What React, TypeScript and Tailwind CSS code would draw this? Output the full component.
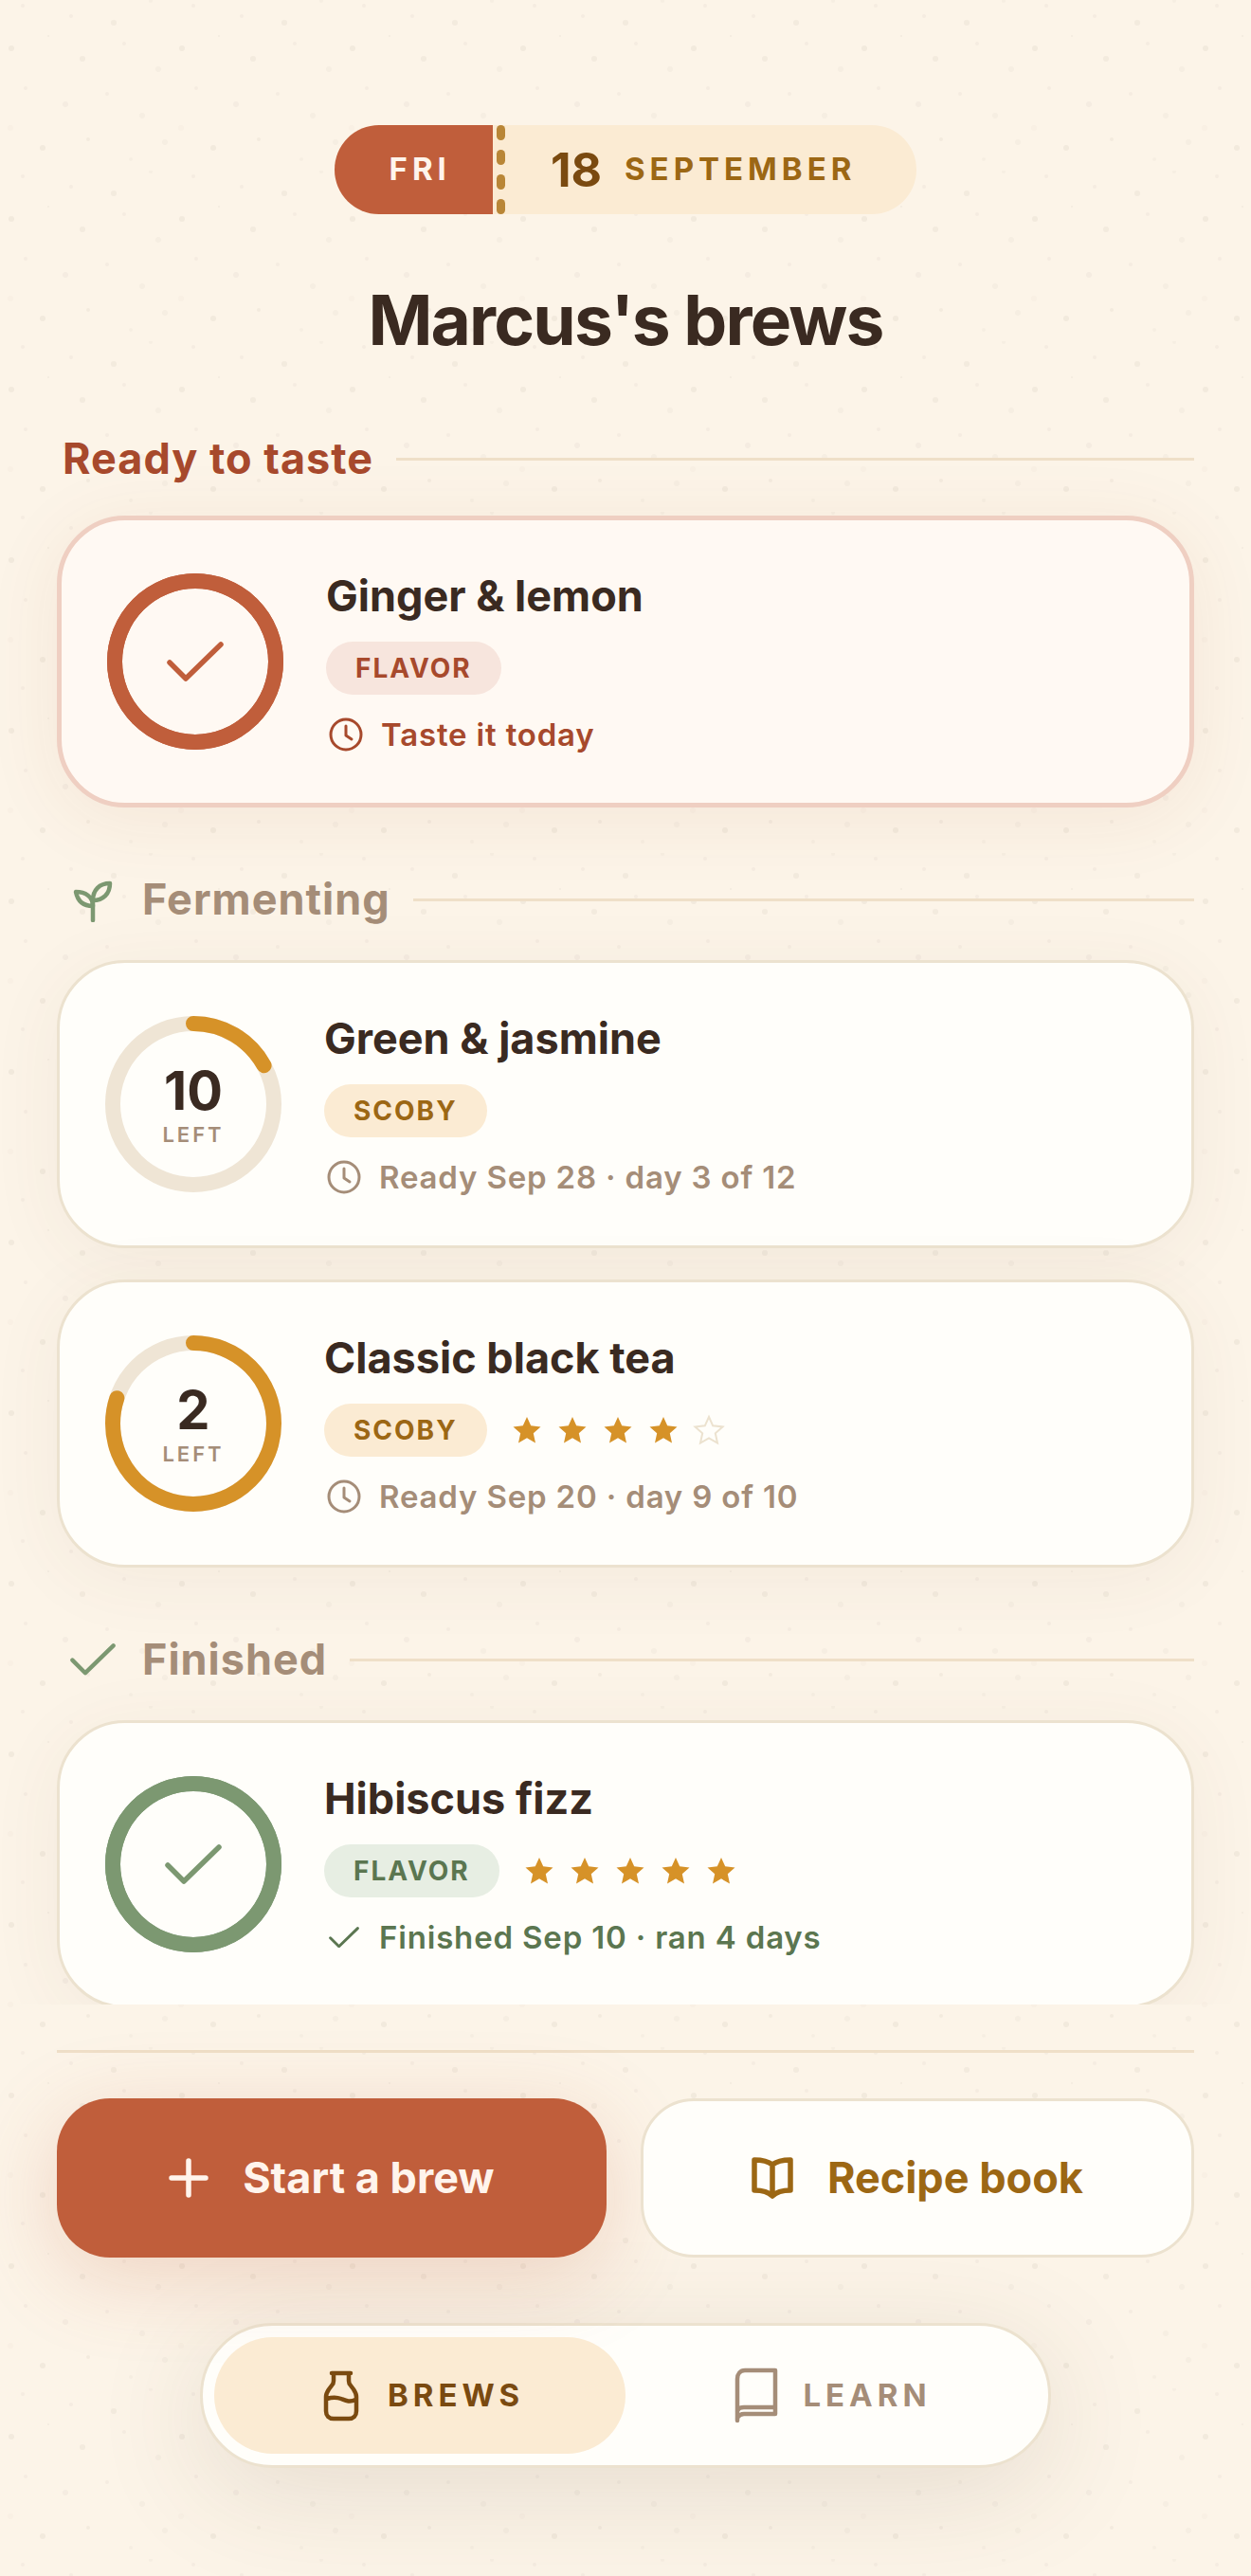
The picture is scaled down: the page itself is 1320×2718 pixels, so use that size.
import React from "react";

type Tone = "red" | "amber" | "green";

const SPECKS: [number, number, number, number][] = [
  [24, 6, 2, 0.04], [75, 17, 2, 0.04], [120, 24, 3, 0.05], [51, 38, 1, 0.05], [12, 51, 3, 0.06],
  [131, 46, 2, 0.04], [87, 62, 3, 0.05], [167, 73, 3, 0.03], [27, 93, 2, 0.04], [113, 99, 2, 0.04],
  [69, 110, 3, 0.04], [150, 122, 3, 0.03], [11, 135, 3, 0.02], [93, 147, 2, 0.05], [45, 156, 3, 0.06],
  [174, 150, 3, 0.03], [138, 168, 2, 0.03], [159, 1, 2, 0.03],
];

function Speckles() {
  return (
    <svg className="pointer-events-none absolute inset-0 h-full w-full" aria-hidden="true">
      <defs>
        <pattern id="specks" width="180" height="180" patternUnits="userSpaceOnUse">
          {SPECKS.map(([x, y, r, o]) => (
            <circle key={`${x}-${y}`} cx={x} cy={y} r={r} fill="#4f3c2b" opacity={o} />
          ))}
        </pattern>
      </defs>
      <rect width="100%" height="100%" fill="url(#specks)" />
    </svg>
  );
}

function Clock() {
  return (
    <svg viewBox="0 0 42 42" className="h-[42px] w-[42px]" fill="none" stroke="currentColor" strokeWidth="3" strokeLinecap="round" strokeLinejoin="round" aria-hidden="true">
      <circle cx="21" cy="21" r="16" />
      <path d="M21 12v10l6 4" />
    </svg>
  );
}

function Check({ className }: { className: string }) {
  return (
    <svg viewBox="0 0 60 43" className={className} fill="none" stroke="currentColor" strokeWidth="5.5" strokeLinecap="round" strokeLinejoin="round" aria-hidden="true">
      <path d="M3 22 20 39 57 3" />
    </svg>
  );
}

function Sprout() {
  return (
    <svg viewBox="0 0 48 48" className="h-12 w-12" fill="none" stroke="currentColor" strokeWidth="4.5" strokeLinecap="round" strokeLinejoin="round" aria-hidden="true">
      <path d="M24 46V24" />
      <path d="M24 31C14 31 8 26 6 16C16 16 24 21 24 31Z" />
      <path d="M24 25C24 14 31 7 42 7C42 18 35 25 24 25Z" />
    </svg>
  );
}

function Ring({ color, track, progress, children }: { color: string; track: string; progress: number; children: React.ReactNode }) {
  const c = 2 * Math.PI * 85;
  return (
    <div className="relative grid h-[186px] w-[186px] shrink-0 place-items-center">
      <svg viewBox="0 0 186 186" className="absolute inset-0 -rotate-90" fill="none" strokeWidth="16" aria-hidden="true">
        <circle cx="93" cy="93" r="85" stroke={track} />
        <circle cx="93" cy="93" r="85" stroke={color} strokeLinecap="round" strokeDasharray={`${c * progress} ${c}`} />
      </svg>
      {children}
    </div>
  );
}

function Left({ days }: { days: number }) {
  return (
    <div className="flex flex-col items-center pt-2">
      <span className="text-[56px] leading-[56px] font-bold text-[#3a2a21]">{days}</span>
      <span className="text-[22px] leading-9 font-semibold tracking-[3px] text-[#a58d78]">LEFT</span>
    </div>
  );
}

function Stars({ value }: { value: number }) {
  return (
    <div className="ml-6 flex gap-3" role="img" aria-label={`${value} out of 5 stars`}>
      {[1, 2, 3, 4, 5].map((n) => (
        <svg key={n} viewBox="0 0 36 36" className="h-9 w-9" aria-hidden="true">
          <path
            d="M18 4 22.2 13.3 32.5 14.4 24.8 21.3 27 31.5 18 26.3 9 31.5 11.2 21.3 3.5 14.4 13.8 13.3Z"
            fill={n <= value ? "#d69228" : "none"}
            stroke={n <= value ? "none" : "#ece2cf"}
            strokeWidth="2"
          />
        </svg>
      ))}
    </div>
  );
}

const BADGE: Record<Tone, string> = {
  red: "bg-[#f7e5dd] text-[#a7492c]",
  amber: "bg-[#fbebd3] text-[#9c6714]",
  green: "bg-[#e7eee3] text-[#5b7650]",
};

function Card({ highlight, ring, title, badge, tone, stars, note, noteClass }: {
  highlight?: boolean;
  ring: React.ReactNode;
  title: string;
  badge: string;
  tone: Tone;
  stars?: number;
  note: React.ReactNode;
  noteClass: string;
}) {
  return (
    <article
      className={
        highlight
          ? "flex items-center gap-[45px] rounded-[72px] border-5 border-[#efcfc2] bg-[#fff9f3] px-12 py-[50px] shadow-[0_12px_80px_rgba(150,80,40,0.08)]"
          : "flex items-center gap-[45px] rounded-[72px] border-3 border-[#ece2cf] bg-[#fffefa] px-12 py-[50px] shadow-[0_12px_80px_rgba(95,75,50,0.06)]"
      }
    >
      {ring}
      <div className="flex min-w-0 flex-col">
        <h3 className="text-[45px] leading-[60px] font-bold text-[#3a2a21]">{title}</h3>
        <div className="mt-[18px] flex items-center">
          <span className={`rounded-full px-[31px] text-[28px] leading-[56px] font-bold tracking-[2px] ${BADGE[tone]}`}>{badge}</span>
          {stars !== undefined && <Stars value={stars} />}
        </div>
        <p className={`mt-5 flex items-center gap-4 text-[33px] leading-[44px] font-semibold tracking-wide ${noteClass}`}>{note}</p>
      </div>
    </article>
  );
}

function SectionTitle({ icon, className, children }: { icon?: React.ReactNode; className: string; children: React.ReactNode }) {
  return (
    <div className="flex items-center gap-6">
      <h2 className={`flex items-center gap-7 text-[45px] leading-[60px] font-bold tracking-[1px] ${className}`}>
        {icon}
        {children}
      </h2>
      <div className="h-[3px] flex-1 bg-[#efdfc8]" />
    </div>
  );
}

export default function App() {
  return (
    <div className="relative flex h-screen flex-col overflow-hidden bg-[#fcf4e8] font-['Inter',sans-serif]">
      <Speckles />
      <header className="relative flex flex-col items-center pt-33">
        <time className="flex h-[94px] items-stretch overflow-hidden rounded-full bg-[#fbebd3]">
          <span className="flex items-center bg-[#c05e3b] pr-11 pl-[58px] text-[33px] font-bold tracking-[5px] text-[#fff4ec]">FRI</span>
          <span className="ml-1 flex flex-col justify-between" aria-hidden="true">
            {[0, 1, 2, 3].map((n) => (
              <span key={n} className="h-4 w-[9px] rounded-full bg-[#b98637]" />
            ))}
          </span>
          <span className="flex items-center gap-6 pr-16 pl-12">
            <span className="text-[50px] font-bold text-[#7a4a10]">18</span>
            <span className="text-[33px] font-bold tracking-[5px] text-[#9c6714]">SEPTEMBER</span>
          </span>
        </time>
        <h1 className="mt-16 text-[73px] leading-[96px] font-bold tracking-tight text-[#3a2a21]">Marcus's brews</h1>
      </header>

      <main className="relative min-h-0 flex-1 overflow-y-auto px-15 pt-17 [scrollbar-width:none]">
        <section>
          <SectionTitle className="pl-[6px] text-[#a7492c]">Ready to taste</SectionTitle>
          <div className="mt-[30px]">
            <Card
              highlight
              ring={
                <Ring color="#c05e3b" track="#c05e3b" progress={1}>
                  <Check className="w-15 text-[#c05e3b]" />
                </Ring>
              }
              title="Ginger & lemon"
              badge="FLAVOR"
              tone="red"
              noteClass="text-[#a7492c]"
              note={<><Clock />Taste it today</>}
            />
          </div>
        </section>

        <section className="mt-[67px]">
          <SectionTitle icon={<Sprout />} className="pl-[14px] text-[#a58d78] [&>svg]:text-[#7c9871]">Fermenting</SectionTitle>
          <div className="mt-[34px] flex flex-col gap-[33px]">
            <Card
              ring={<Ring color="#d69228" track="#efe5d5" progress={0.17}><Left days={10} /></Ring>}
              title="Green & jasmine"
              badge="SCOBY"
              tone="amber"
              noteClass="text-[#a58d78]"
              note={<><Clock />Ready Sep 28 · day 3 of 12</>}
            />
            <Card
              ring={<Ring color="#d69228" track="#efe5d5" progress={0.8}><Left days={2} /></Ring>}
              title="Classic black tea"
              badge="SCOBY"
              tone="amber"
              stars={4}
              noteClass="text-[#a58d78]"
              note={<><Clock />Ready Sep 20 · day 9 of 10</>}
            />
          </div>
        </section>

        <section className="mt-[67px]">
          <SectionTitle icon={<Check className="w-12" />} className="pl-[14px] text-[#a58d78] [&>svg]:text-[#7c9871]">Finished</SectionTitle>
          <div className="mt-[34px]">
            <Card
              ring={
                <Ring color="#7c9871" track="#7c9871" progress={1}>
                  <Check className="w-15 text-[#7c9871]" />
                </Ring>
              }
              title="Hibiscus fizz"
              badge="FLAVOR"
              tone="green"
              stars={5}
              noteClass="text-[#5b7650]"
              note={<><Check className="mx-[5px] w-8" />Finished Sep 10 · ran 4 days</>}
            />
          </div>
        </section>
      </main>

      <footer className="relative px-15 pt-12 pb-[114px]">
        <div className="h-[3px] bg-[#efdfc8]" />
        <div className="mt-12 flex gap-9">
          <button type="button" className="flex h-[168px] flex-auto items-center justify-center gap-9 rounded-[56px] bg-[#c05e3b] px-1 text-[45px] font-bold text-[#fff4ec] shadow-[0_20px_90px_rgba(192,94,59,0.22)]">
            <svg viewBox="0 0 42 42" className="h-[42px] w-[42px]" stroke="currentColor" strokeWidth="5.5" strokeLinecap="round" aria-hidden="true">
              <path d="M21 3v36M3 21h36" />
            </svg>
            Start a brew
          </button>
          <button type="button" className="flex h-[168px] flex-auto items-center justify-center gap-9 rounded-[56px] border-3 border-[#ece2cf] bg-[#fffefa] text-[45px] font-bold text-[#9c6714]">
            <svg viewBox="0 0 44 44" className="h-11 w-11" fill="none" stroke="currentColor" strokeWidth="5.5" strokeLinejoin="round" aria-hidden="true">
              <path d="M22 8C17 4 10 3 3 3v32c7 0 14 1 19 6 5-5 12-6 19-6V3C34 3 27 4 22 8ZM22 8v32" />
            </svg>
            Recipe book
          </button>
        </div>
        <nav className="mx-auto mt-[69px] grid h-[153px] w-[898px] max-w-full grid-cols-2 rounded-full border-3 border-[#ece2cf] bg-[#fffefa] p-3 shadow-[0_24px_120px_rgba(80,60,40,0.13)]">
          <a href="#brews" aria-current="page" className="flex items-center justify-center gap-[22px] rounded-full bg-[#fbebd3] text-[33px] font-bold tracking-[5px] text-[#7a4a10]">
            <svg viewBox="-9 -4 54 60" className="h-15 w-[54px]" fill="none" stroke="currentColor" strokeWidth="4.5" strokeLinecap="round" strokeLinejoin="round" aria-hidden="true">
              <path d="M8 2h20M10 3v7c0 2-1 4-2 5l-3 4c-2 3-3 5-3 8v15c0 5 3 8 8 8h16c5 0 8-3 8-8V27c0-3-1-5-3-8l-3-4c-1-1-2-3-2-5V3M3 29c6-2 10-2 15 0s9 4 15 1" />
            </svg>
            BREWS
          </a>
          <a href="#learn" className="flex items-center justify-center gap-[22px] rounded-full text-[33px] font-bold tracking-[5px] text-[#a58d78]">
            <svg viewBox="-5 -1 54 60" className="h-15 w-[54px]" fill="none" stroke="currentColor" strokeWidth="4.5" strokeLinecap="round" strokeLinejoin="round" aria-hidden="true">
              <path d="M2 55V11c0-5 3-9 8-9h32v46H9c-3 0-5 1-7 4M42 41H9c-3 0-6 1-7 4" />
            </svg>
            LEARN
          </a>
        </nav>
      </footer>
    </div>
  );
}
